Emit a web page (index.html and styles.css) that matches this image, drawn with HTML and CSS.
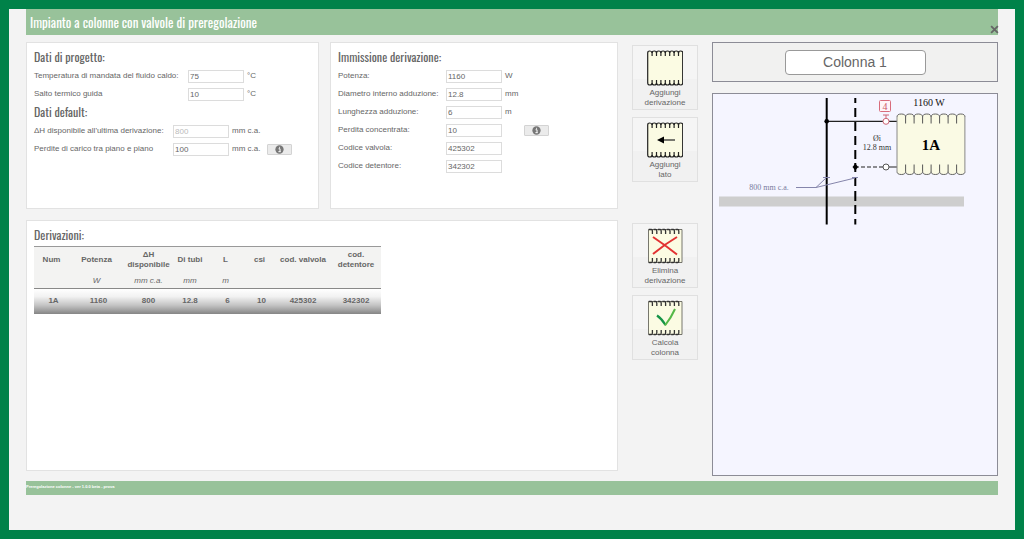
FILE: index.html
```html
<!DOCTYPE html>
<html lang="it">
<head>
<meta charset="utf-8">
<meta name="viewport" content="width=device-width, initial-scale=1">
<title>Impianto a colonne con valvole di preregolazione</title>
<link rel="stylesheet" href="styles.css">
</head>
<body>
<svg class="defs" aria-hidden="true">
  <defs>
    <symbol id="info" viewBox="0 0 10 10">
      <circle cx="5" cy="5" r="4.6" fill="#777"/>
      <path d="M4 4.2h1.6v3M3.800 7.400h2.600M4.600 2.600h1" stroke="#fff" stroke-width="1.100" fill="none"/>
    </symbol>
    <symbol id="radiator" viewBox="0 0 36 36">
      <path d="M.7 33V3q0-2 2.1-2t2.3 2q0-2 2.2-2t2.2 2q0-2 2.2-2t2.2 2q0-2 2.2-2t2.2 2q0-2 2.2-2t2.2 2q0-2 2.2-2t2.2 2q0-2 2.2-2t2.2 2q0-2 2.2-2t2 2V33q0 2-2 2t-2.2-2q0 2-2.2 2t-2.2-2q0 2-2.2 2t-2.2-2q0 2-2.2 2t-2.2-2q0 2-2.2 2t-2.2-2q0 2-2.2 2t-2.2-2q0 2-2.2 2t-2.2-2q0 2-2.2 2t-2.1-2Z" fill="#fbfbe3" stroke="#222" stroke-width="1.200"/>
      <path d="M5.100 2v4M9.500 2v4M13.900 2v4M18.300 2v4M22.700 2v4M27.100 2v4M31.500 2v4M5.100 30v4M9.500 30v4M13.900 30v4M18.300 30v4M22.700 30v4M27.100 30v4M31.500 30v4" stroke="#222" stroke-width="1.200" fill="none"/>
    </symbol>
    <symbol id="radiator-flat" viewBox="0 0 36 36">
      <path d="M1.500 1.500H35V34.500H1.500Z" fill="#fbfbe3" stroke="#55554c" stroke-width=".8"/>
      <path d="M1.800 1.500h2.600q1 0 1 1.500v3M6.600 1.500h2.200q1 0 1 1.500v3M11 1.500h2.200q1 0 1 1.500v3M15.400 1.500h2.200q1 0 1 1.500v3M19.800 1.500h2.200q1 0 1 1.500v3M24.200 1.500h2.200q1 0 1 1.500v3M28.600 1.500h2.200q1 0 1 1.500v3M1.800 34.500h2.600q1 0 1-1.500v-3M6.600 34.500h2.200q1 0 1-1.500v-3M11 34.500h2.200q1 0 1-1.500v-3M15.400 34.500h2.200q1 0 1-1.500v-3M19.800 34.500h2.200q1 0 1-1.500v-3M24.200 34.500h2.200q1 0 1-1.500v-3M28.600 34.500h2.200q1 0 1-1.500v-3" fill="none" stroke="#333" stroke-width="1.300"/>
    </symbol>
  </defs>
</svg>
<div class="page">
  <header class="titlebar">
    <h1>Impianto a colonne con valvole di preregolazione</h1>
    <button class="close" type="button" aria-label="Chiudi"><svg viewBox="0 0 8 8"><path d="M1 1l6 6M7 1L1 7" stroke="#666" stroke-width="1.600"/></svg></button>
  </header>
  <main class="workspace">
    <div class="left">
      <section class="panel project">
        <h2>Dati di progetto:</h2>
        <div class="fields temp">
          <label for="tm">Temperatura di mandata del fluido caldo:</label><input id="tm" value="75"><span>°C</span>
          <label for="st">Salto termico guida</label><input id="st" value="10"><span>°C</span>
        </div>
        <h2>Dati default:</h2>
        <div class="fields defaults">
          <label for="dh">ΔH disponibile all'ultima derivazione:</label><input id="dh" value="800" disabled><span>mm c.a.</span><span></span>
          <label for="pc">Perdite di carico tra piano e piano</label><input id="pc" value="100"><span>mm c.a.</span>
          <button class="info" type="button" aria-label="Informazioni"><svg><use href="#info"/></svg></button>
        </div>
      </section>
      <section class="panel branch">
        <h2>Immissione derivazione:</h2>
        <div class="fields entry">
          <label for="po">Potenza:</label><input id="po" value="1160"><span>W</span><span></span>
          <label for="di">Diametro interno adduzione:</label><input id="di" value="12.8"><span>mm</span><span></span>
          <label for="lu">Lunghezza adduzione:</label><input id="lu" value="6"><span>m</span><span></span>
          <label for="pe">Perdita concentrata:</label><input id="pe" value="10"><span></span><button class="info" type="button" aria-label="Informazioni"><svg><use href="#info"/></svg></button>
          <label for="cv">Codice valvola:</label><input id="cv" value="425302"><span></span><span></span>
          <label for="cd">Codice detentore:</label><input id="cd" value="342302"><span></span><span></span>
        </div>
      </section>
      <section class="panel list">
        <h2>Derivazioni:</h2>
        <table>
          <colgroup><col class="c-num"><col class="c-pot"><col class="c-dh"><col class="c-di"><col class="c-l"><col class="c-csi"><col class="c-val"><col class="c-det"></colgroup>
          <thead>
            <tr><th>Num</th><th>Potenza</th><th>ΔH disponibile</th><th>Di tubi</th><th>L</th><th>csi</th><th>cod. valvola</th><th>cod. detentore</th></tr>
            <tr class="units"><td></td><td>W</td><td>mm c.a.</td><td>mm</td><td>m</td><td></td><td></td><td></td></tr>
          </thead>
          <tbody>
            <tr><td class="shift">1A</td><td class="shift">1160</td><td>800</td><td>12.8</td><td class="shift">6</td><td class="shift">10</td><td>425302</td><td>342302</td></tr>
          </tbody>
        </table>
      </section>
    </div>
    <nav class="actions">
      <div class="group">
        <button class="action" type="button"><svg viewBox="0 0 36 36"><use href="#radiator"/></svg>Aggiungi<br>derivazione</button>
        <button class="action" type="button"><svg viewBox="0 0 36 36"><use href="#radiator"/><path d="M14 18H28" stroke="#222" stroke-width="1.200"/><path d="M10 18L17 14.500V21.500Z" fill="#000"/></svg>Aggiungi<br>lato</button>
      </div>
      <div class="group">
        <button class="action" type="button"><svg viewBox="0 0 36 36"><use href="#radiator-flat"/><path d="M6 9Q18 17 30 26.500M30 9Q18 16 6 26" stroke="#e23232" stroke-width="2" fill="none"/></svg>Elimina<br>derivazione</button>
        <button class="action" type="button"><svg viewBox="0 0 36 36"><use href="#radiator-flat"/><path d="M10 15.500Q14.500 18.500 18.500 25" stroke="#159447" stroke-width="2.200" fill="none"/><path d="M18 25.500Q24 18 28 9" stroke="#55b848" stroke-width="2" fill="none"/></svg>Calcola<br>colonna</button>
      </div>
    </nav>
    <div class="right">
      <div class="column-name"><input aria-label="Nome colonna" value="Colonna 1"></div>
      <div class="drawing">
        <svg viewBox="713 94 284 134" role="img" aria-label="Schema della colonna">
          <rect x="719" y="196.500" width="245" height="10" fill="#cecece"/>
          <path d="M826.700 98V224.500" stroke="#000" stroke-width="2"/>
          <path d="M855.300 98v5M855.300 108v9M855.300 122v9M855.300 136v9M855.300 150v9M855.300 163v9M855.300 177v9M855.300 191v10M855.300 205v9M855.300 219v5.500" stroke="#000" stroke-width="2"/>
          <path d="M826.700 121.300H897M889 167H897" stroke="#222" stroke-width="1.200"/>
          <path d="M855 167H883" stroke="#222" stroke-width="1.200" stroke-dasharray="4 2"/>
          <circle cx="826.700" cy="121.200" r="2.300"/>
          <path d="M855.300 163.500l2.800 3.500l-2.800 3.500l-2.800-3.500Z"/>
          <circle cx="886" cy="121.300" r="3" fill="#fff" stroke="#ce6675"/>
          <circle cx="886" cy="167" r="3" fill="#fff" stroke="#555"/>
          <path d="M883 115h6M886 115v3" stroke="#ce6675"/>
          <rect x="879.500" y="100.500" width="11" height="11" rx="1" fill="#fff5f7" stroke="#d86c7c"/>
          <path d="M897 117q0-3 4.300-3t4.300 3q0-3 4.200-3t4.300 3q0-3 4.200-3t4.300 3q0-3 4.200-3t4.300 3q0-3 4.200-3t4.300 3q0-3 4.200-3t4.300 3q0-3 4.200-3t4.300 3q0-3 4.200-3t4.200 3V171.500q0 3-4.200 3t-4.200-3q0 3-4.300 3t-4.200-3q0 3-4.300 3t-4.200-3q0 3-4.300 3t-4.200-3q0 3-4.300 3t-4.200-3q0 3-4.300 3t-4.200-3q0 3-4.300 3t-4.200-3q0 3-4.300 3t-4.300-3Z" fill="#fafae4"/>
          <path d="M964.900 117V171.500M897 117V171.500" stroke="#888"/>
          <path d="M897 117q0-3 4.300-3t4.300 3q0-3 4.200-3t4.300 3q0-3 4.200-3t4.300 3q0-3 4.200-3t4.300 3q0-3 4.200-3t4.300 3q0-3 4.200-3t4.300 3q0-3 4.200-3t4.300 3q0-3 4.200-3t4.200 3M897 171.500q0 3 4.300 3t4.300-3q0 3 4.200 3t4.300-3q0 3 4.200 3t4.300-3q0 3 4.200 3t4.300-3q0 3 4.200 3t4.300-3q0 3 4.200 3t4.300-3q0 3 4.200 3t4.300-3q0 3 4.200 3t4.200-3" fill="none" stroke="#666"/>
          <path d="M905.600 117v6.500M914.100 117v6.500M922.600 117v6.500M931.100 117v6.500M939.600 117v6.500M948.100 117v6.500M956.600 117v6.500M905.600 164.500v7M914.100 164.500v7M922.600 164.500v7M931.100 164.500v7M939.600 164.500v7M948.100 164.500v7M956.600 164.500v7" stroke="#555"/>
          <path d="M796 187.500H816L826 178M816 187.500L855 178M823 177.500h7M852 177.500h6" stroke="#8585ab" fill="none"/>
          <g text-anchor="middle" class="schema">
            <text x="885" y="110" class="tag">4</text>
            <text x="929" y="106" class="power">1160 W</text>
            <text x="931" y="150" class="name">1A</text>
            <text x="877" y="141">Øi</text>
            <text x="877" y="150">12.8 mm</text>
            <text x="769" y="190" class="head">800 mm c.a.</text>
          </g>
        </svg>
      </div>
    </div>
  </main>
  <footer>Preregolazione colonne - ver 1.0.0 beta - prova</footer>
</div>
</body>
</html>
```
FILE: styles.css
```css
* { box-sizing: border-box; }
body {
  margin: 0;
  min-height: 100vh;
  border: 9px solid #008249;
  background: #f3f3f3;
  color: #666;
  font: 8px/10px "Liberation Sans", Arial, sans-serif;
}
.defs { position: absolute; width: 0; height: 0; }
.page { margin: 0 17px; }
h1, h2 {
  margin: 0;
  font-family: Oswald, "Liberation Sans Narrow", "Roboto Condensed", sans-serif;
  font-weight: 400;
}
button, input { font: inherit; color: inherit; }
.titlebar {
  position: relative;
  height: 26px;
  padding: 0 4px;
  background: #98c29a;
  color: #fff;
}
h1 { font-size: 13px; line-height: 26px; }
h2 { font-size: 12px; line-height: 16px; color: #666; }
.close {
  position: absolute;
  right: -1px;
  bottom: 1px;
  width: 9px;
  height: 9px;
  padding: 0;
  border: 0;
  background: none;
}
.close svg { display: block; }
.workspace {
  display: grid;
  grid-template-columns: 1fr 66px 286px;
  column-gap: 14px;
  margin-top: 7px;
}
.left {
  display: grid;
  grid-template-columns: 293fr 288fr;
  grid-template-rows: 167px 251px;
  gap: 11px;
  align-content: start;
}
.panel {
  padding: 6px 7px;
  border: 1px solid #e2e2e2;
  background: #fff;
}
.list { grid-column: 1 / -1; }
.fields {
  display: grid;
  grid-auto-rows: 18px;
  align-items: center;
  column-gap: 3px;
  margin-top: 2px;
}
.fields + h2 { margin-top: 1px; }
.temp { grid-template-columns: 151px 56px auto; }
.defaults { grid-template-columns: 136px 56px 32px 25px; }
.entry { grid-template-columns: 105px 56px 16px 25px; }
.fields label { white-space: nowrap; }
.fields input {
  width: 56px;
  height: 13px;
  padding: 0 1px;
  border: 1px solid #dcdcdc;
  background: #fff;
}
.fields input:disabled { color: #bbb; }
.info {
  display: flex;
  align-items: center;
  justify-content: center;
  width: 25px;
  height: 11px;
  padding: 0;
  border: 1px solid #d3d3d3;
  border-radius: 1px;
  background: #ebebeb;
}
.info svg { width: 9px; height: 9px; }
table {
  width: 347px;
  margin-top: 3px;
  border-collapse: collapse;
  table-layout: fixed;
  text-align: center;
}
.c-num { width: 35px; }
.c-pot { width: 55px; }
.c-dh { width: 49px; }
.c-di { width: 34px; }
.c-l { width: 37px; }
.c-csi { width: 31px; }
.c-val { width: 56px; }
.c-det { width: 50px; }
th, td { padding: 0; }
thead { background: #f3f3f2; border-top: 1px solid #999; border-bottom: 1px solid #888; }
thead th { height: 27px; }
.units td { height: 15px; font-style: italic; }
tbody tr {
  height: 25px;
  background: linear-gradient(#fff 0%, #f2f2f2 30%, #c4c4c4 65%, #858585 100%);
  font-weight: 700;
}
.shift { padding-left: 4px; }
.actions { padding-top: 3px; }
.group { display: grid; gap: 7px; }
.group + .group { margin-top: 41px; }
.action {
  display: block;
  width: 100%;
  height: 65px;
  padding: 3px 0 0;
  border: 1px solid #e0e0e0;
  background: linear-gradient(#f5f5f5 52%, #f1f1f1 52%);
}
.action svg {
  display: block;
  width: 36px;
  height: 36px;
  margin: 0 auto 2px;
}
.right {
  display: grid;
  grid-template-rows: 40px 383px;
  gap: 11px;
}
.column-name, .drawing { border: 1px solid #8c8c96; }
.column-name {
  display: flex;
  align-items: center;
  justify-content: center;
  background: #f1f1f0;
}
.column-name input {
  width: 141px;
  height: 25px;
  border: 1px solid #999;
  border-radius: 4px;
  background: #fff;
  font-size: 14px;
  text-align: center;
}
.drawing { background: #f5f5ff; }
.drawing svg { display: block; width: 100%; }
.schema { font: 8px "Liberation Serif", "Times New Roman", serif; fill: #333; }
.power { font-size: 10px; fill: #111; }
.name { font-size: 15px; font-weight: 700; fill: #000; }
.tag { font-size: 10px; fill: #cc5868; }
.head { fill: #777a9c; }
footer {
  height: 14px;
  margin-top: 5px;
  background: #98c29a;
  color: #fff;
  font-size: 4px;
  font-weight: 700;
  line-height: 11px;
}
```
